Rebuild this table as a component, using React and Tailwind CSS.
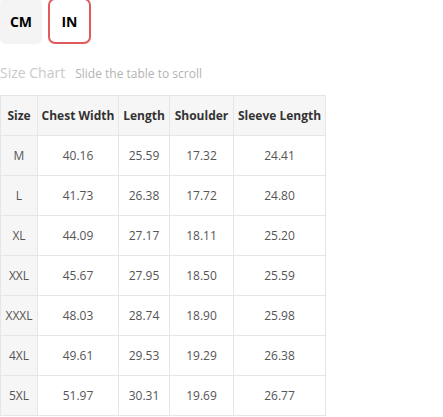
const ROWS = [
  ['M', '40.16', '25.59', '17.32', '24.41'],
  ['L', '41.73', '26.38', '17.72', '24.80'],
  ['XL', '44.09', '27.17', '18.11', '25.20'],
  ['XXL', '45.67', '27.95', '18.50', '25.59'],
  ['XXXL', '48.03', '28.74', '18.90', '25.98'],
  ['4XL', '49.61', '29.53', '19.29', '26.38'],
  ['5XL', '51.97', '30.31', '19.69', '26.77'],
]

const HEAD = ['Size', 'Chest Width', 'Length', 'Shoulder', 'Sleeve Length']
const WIDTHS = ['w-[37px]', 'w-[81px]', 'w-[51px]', 'w-[64px]', 'w-[92px]']

export default function App() {
  return (
    <div className="bg-white min-h-screen font-['Open_Sans',sans-serif] overflow-hidden">
      {/* unit toggle */}
      <div className="flex gap-[6px] -mt-[2px]">
        <button className="w-[42px] h-[46px] rounded-[6px] bg-[#f4f4f4] text-[14px] font-bold text-black">
          CM
        </button>
        <button className="w-[43px] h-[46px] rounded-[7px] border-2 border-[#e05c5c] bg-white text-[14px] font-bold text-black">
          IN
        </button>
      </div>

      <div className="flex items-baseline gap-[10px] mt-[18px] mb-[10px] leading-[22px]">
        <span className="text-[14px] text-[#c9c9c9]">Size Chart</span>
        <span className="text-[12px] text-[#b3b3b3]">Slide the table to scroll</span>
      </div>

      <table className="border-collapse table-fixed text-[12px]">
        <thead>
          <tr>
            {HEAD.map((h, i) => (
              <th
                key={h}
                className={`${WIDTHS[i]} h-[40px] p-0 border border-[#e6e6e6] bg-[#f6f6f6] font-bold text-[#333] text-center whitespace-nowrap`}
              >
                {h}
              </th>
            ))}
          </tr>
        </thead>
        <tbody>
          {ROWS.map((r) => (
            <tr key={r[0]}>
              {r.map((c, i) => (
                <td
                  key={i}
                  className={
                    'h-[40px] p-0 border border-[#e6e6e6] text-center text-[#555] ' +
                    (i === 0 ? 'bg-[#f6f6f6]' : 'bg-white')
                  }
                >
                  {c}
                </td>
              ))}
            </tr>
          ))}
        </tbody>
      </table>
    </div>
  )
}
